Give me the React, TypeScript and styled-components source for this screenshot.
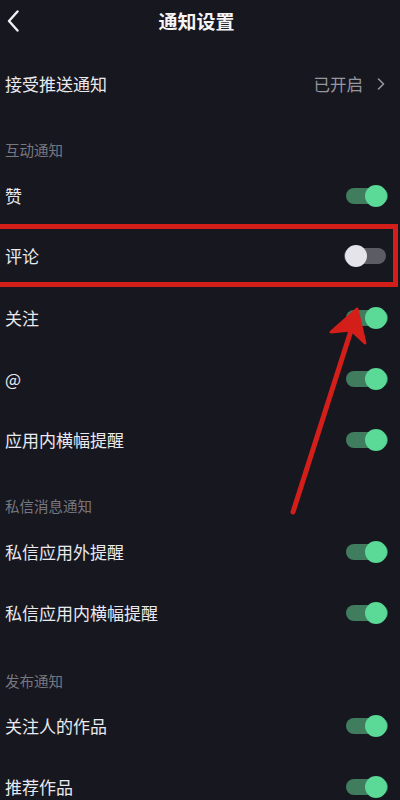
import React from "react";
import styled, { createGlobalStyle } from "styled-components";

const colors = {
  bg: "#171720",
  text: "#e9e9ee",
  sub: "#77777f",
  value: "#96969e",
  trackOn: "#3f7d5e",
  thumbOn: "#5bd996",
  trackOff: "#5c5c64",
  thumbOff: "#e4e4ea",
  red: "#d41e1a",
};

const GlobalStyle = createGlobalStyle`
  html, body {
    margin: 0;
    padding: 0;
    background: ${colors.bg};
  }
  body {
    font-family: "Noto Sans CJK SC", "Noto Sans", sans-serif;
    color: ${colors.text};
    overflow: hidden;
  }
`;

const Page = styled.div`
  position: relative;
  width: 400px;
  height: 800px;
  overflow: hidden;
  background: ${colors.bg};
`;

const Header = styled.div`
  height: 53px;
  display: grid;
  grid-template-columns: 60px 1fr 60px;
  align-items: start;
`;

const BackButton = styled.div`
  padding: 10px 0 0 7px;
  display: flex;
`;

const Title = styled.div`
  text-align: center;
  font-size: 19px;
  font-weight: 700;
  line-height: 26px;
  padding: 8px 7px 0 0;
  color: #f4f4f6;
`;

const Row = styled.div<{ $highlight?: boolean }>`
  height: 61px;
  box-sizing: border-box;
  display: flex;
  align-items: center;
  justify-content: space-between;
  padding: 0 12px 0 5px;
  ${(p) =>
    p.$highlight &&
    `
    margin: -2px 2px 0 0;
    height: 63px;
    border: 5px solid ${colors.red};
    border-left: 0;
    padding-left: 5px;
    padding-right: 7px;
  `}
`;

const Label = styled.span`
  font-size: 17px;
  line-height: 24px;
  color: ${colors.text};
`;

const Value = styled.span`
  display: flex;
  align-items: center;
  gap: 14px;
  font-size: 16.5px;
  color: ${colors.value};
  padding-right: 3px;
`;

const SectionTitle = styled.div<{ $tall?: boolean }>`
  height: ${(p) => (p.$tall ? 52 : 51)}px;
  box-sizing: border-box;
  padding: ${(p) => (p.$tall ? 28 : 26)}px 0 0 5px;
  font-size: 14.5px;
  line-height: 20px;
  color: ${colors.sub};
`;

const Track = styled.div<{ $on: boolean }>`
  position: relative;
  width: 42px;
  height: 22px;
  flex-shrink: 0;
  &::before {
    content: "";
    position: absolute;
    left: 0;
    right: 0;
    top: 3px;
    height: 16px;
    border-radius: 8px;
    background: ${(p) => (p.$on ? colors.trackOn : colors.trackOff)};
  }
  &::after {
    content: "";
    position: absolute;
    top: 0;
    ${(p) => (p.$on ? "right: 1px;" : "left: 1px;")}
    width: 22px;
    height: 22px;
    border-radius: 50%;
    background: ${(p) => (p.$on ? colors.thumbOn : colors.thumbOff)};
  }
`;

const ArrowLayer = styled.svg`
  position: absolute;
  left: 0;
  top: 0;
  pointer-events: none;
`;

type Item = { label: string; on: boolean; highlight?: boolean };
type Section = { title: string; items: Item[] };

const sections: Section[] = [
  {
    title: "互动通知",
    items: [
      { label: "赞", on: true },
      { label: "评论", on: false, highlight: true },
      { label: "关注", on: true },
      { label: "@", on: true },
      { label: "应用内横幅提醒", on: true },
    ],
  },
  {
    title: "私信消息通知",
    items: [
      { label: "私信应用外提醒", on: true },
      { label: "私信应用内横幅提醒", on: true },
    ],
  },
  {
    title: "发布通知",
    items: [
      { label: "关注人的作品", on: true },
      { label: "推荐作品", on: true },
    ],
  },
];

export default function App() {
  return (
    <Page>
      <GlobalStyle />
      <Header>
        <BackButton>
          <svg width="12" height="22" viewBox="0 0 12 22">
            <path
              d="M10.5 1.5 L2 11 L10.5 20.5"
              fill="none"
              stroke="#f0f0f2"
              strokeWidth="2.4"
              strokeLinecap="round"
              strokeLinejoin="round"
            />
          </svg>
        </BackButton>
        <Title>通知设置</Title>
        <div />
      </Header>

      <Row>
        <Label>接受推送通知</Label>
        <Value>
          已开启
          <svg width="8" height="12" viewBox="0 0 8 12">
            <path
              d="M1.5 1 L6.5 6 L1.5 11"
              fill="none"
              stroke={colors.value}
              strokeWidth="1.6"
              strokeLinecap="round"
              strokeLinejoin="round"
            />
          </svg>
        </Value>
      </Row>

      {sections.map((s, i) => (
        <React.Fragment key={s.title}>
          <SectionTitle $tall={i === 2}>{s.title}</SectionTitle>
          {s.items.map((it) => (
            <Row key={it.label} $highlight={it.highlight}>
              <Label>{it.label}</Label>
              <Track $on={it.on} />
            </Row>
          ))}
        </React.Fragment>
      ))}

      <ArrowLayer width="400" height="800" viewBox="0 0 400 800">
        <path
          d="M293 512 L355 318"
          stroke={colors.red}
          strokeWidth="5"
          strokeLinecap="round"
          fill="none"
        />
        <path
          d="M357 309 L331 332 L351 330 L365 343 Z"
          fill={colors.red}
          stroke={colors.red}
          strokeWidth="3"
          strokeLinejoin="round"
        />
      </ArrowLayer>
    </Page>
  );
}
